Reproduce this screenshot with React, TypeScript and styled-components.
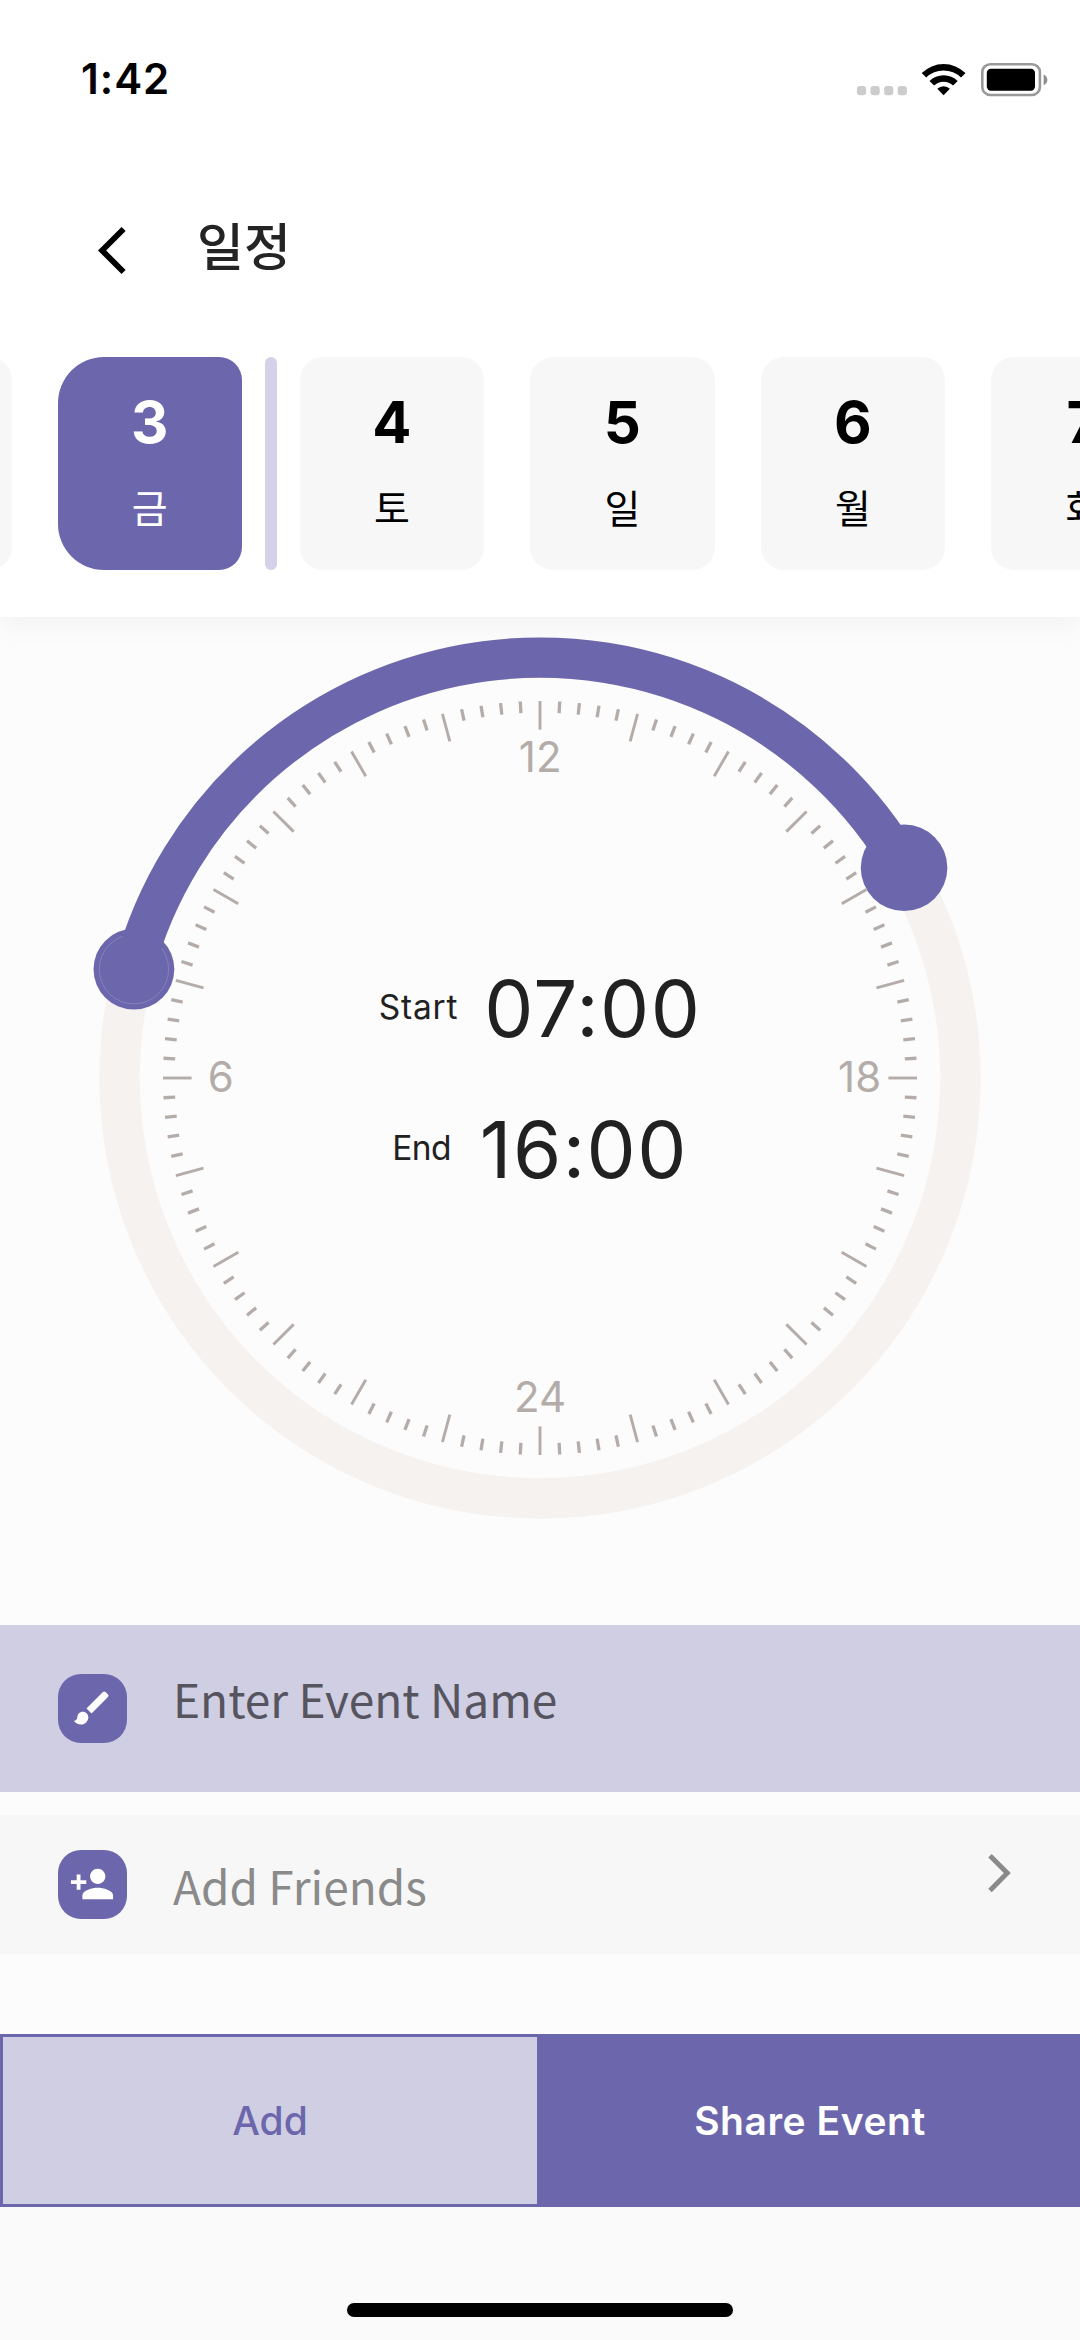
import React from "react";
import styled, { createGlobalStyle, css } from "styled-components";
import { MdBrush, MdPersonAdd } from "react-icons/md";

const color = {
  primary: "#6c67ac",
  soft: "#d0cee2",
  bar: "#d4d1e8",
  page: "#fcfcfc",
  foot: "#fafafa",
  card: "#f7f7f7",
  track: "#f6f2ef",
  tick: "#b4aca8",
  ink: "#212121",
};

const latin = `Inter, "Liberation Sans", sans-serif`;
const korean = `"Noto Sans CJK KR", "Noto Sans", sans-serif`;

const GlobalStyle = createGlobalStyle`
  * { box-sizing: border-box; }
  body { margin: 0; background: ${color.page}; }
`;

const Screen = styled.div`
  width: 1080px;
  height: 2340px;
  display: flex;
  flex-direction: column;
  overflow: hidden;
  background: ${color.page};
  font-family: ${latin};
  color: ${color.ink};
`;

const Header = styled.header`
  flex: none;
  height: 617px;
  display: flex;
  flex-direction: column;
  background: #fff;
  box-shadow: 0 11px 23px rgba(0, 0, 0, 0.035);
`;

const StatusBar = styled.div`
  height: 157px;
  display: flex;
  justify-content: space-between;
  align-items: center;
  padding: 0 32px 0 81px;
`;

const Clock = styled.span`
  font-size: 42px;
  font-weight: 600;
  line-height: 50px;
  letter-spacing: 1px;
  color: #000;
`;

const TitleBar = styled.div`
  height: 200px;
  display: flex;
  align-items: flex-start;
  padding: 62px 0 0 92px;
`;

const BackIcon = styled.svg`
  width: 40px;
  height: 64px;
  display: block;
`;

const Title = styled.h1`
  margin: -7px 0 0 65px;
  font-family: ${korean};
  font-size: 51px;
  font-weight: 500;
  line-height: 64px;
  color: #242424;
`;

const DateStrip = styled.div`
  display: flex;
  gap: 46.1px;
  margin-left: -172.9px;
`;

const ActiveDay = styled.div`
  flex: none;
  display: flex;
  gap: 23px;
  margin-right: -23px;
`;

const DayCard = styled.div<{ $active?: boolean }>`
  flex: none;
  width: 184.4px;
  height: 213.3px;
  padding-top: 25px;
  display: flex;
  flex-direction: column;
  align-items: center;
  border-radius: 23px;
  background: ${color.card};
  color: #000;
  ${(p) =>
    p.$active &&
    css`
      border-radius: 46px 23px 23px 46px;
      background: ${color.primary};
      color: #fff;
    `}
`;

const DayBar = styled.div`
  width: 11.6px;
  border-radius: 6px;
  background: ${color.bar};
`;

const DayNumber = styled.span`
  font-size: 58px;
  font-weight: 750;
  line-height: 80px;
`;

const DayName = styled.span`
  margin-top: 16px;
  font-family: ${korean};
  font-size: 39px;
  line-height: 56px;
`;

const DialArea = styled.section`
  flex: none;
  height: 1008px;
  display: grid;
  grid-template-columns: 1080px;
`;

const DialSvg = styled.svg`
  grid-area: 1 / 1;
  width: 1080px;
  height: 1008px;
  display: block;
`;

const Times = styled.div`
  grid-area: 1 / 1;
  z-index: 1;
  display: flex;
  flex-direction: column;
  align-items: center;
  gap: 41px;
  padding-top: 342px;
`;

const TimeRow = styled.div<{ $gap: number }>`
  display: flex;
  align-items: center;
  gap: ${(p) => p.$gap}px;
  height: 100px;
`;

const TimeLabel = styled.span<{ $tight?: boolean }>`
  font-size: 33.5px;
  line-height: 40px;
  letter-spacing: ${(p) => (p.$tight ? -0.6 : 0.8)}px;
  padding-bottom: 4px;
`;

const TimeValue = styled.span`
  font-size: 78px;
  line-height: 100px;
  letter-spacing: 1.4px;
`;

const Row = styled.div<{ $tall?: boolean }>`
  flex: none;
  height: ${(p) => (p.$tall ? 167 : 139)}px;
  margin-bottom: ${(p) => (p.$tall ? 23 : 80)}px;
  padding: 0 69px 0 57.6px;
  display: flex;
  align-items: center;
  background: ${(p) => (p.$tall ? color.soft : color.card)};
`;

const Tile = styled.div`
  flex: none;
  width: 69.4px;
  height: 69.4px;
  display: flex;
  align-items: center;
  justify-content: center;
  border-radius: 23px;
  background: ${color.primary};
  color: #fff;
`;

const RowText = styled.span<{ $strong?: boolean }>`
  flex: 1;
  margin-left: 46px;
  font-family: ${korean};
  font-size: 46px;
  line-height: 66px;
  color: ${(p) => (p.$strong ? "#56545f" : "#8a8a8a")};
  ${(p) => (p.$strong ? "margin-bottom: 22px" : "margin-top: 0")};
`;

const ChevronIcon = styled.svg`
  width: 24px;
  height: 40px;
  display: block;
  margin-bottom: 23px;
`;

const Actions = styled.div`
  flex: none;
  height: 173px;
  display: grid;
  grid-template-columns: 540px 540px;
`;

const ActionButton = styled.button<{ $filled?: boolean }>`
  display: flex;
  align-items: center;
  justify-content: center;
  padding: 0;
  border: 3px solid ${color.primary};
  border-radius: 0;
  background: ${(p) => (p.$filled ? color.primary : color.soft)};
  color: ${(p) => (p.$filled ? "#fff" : color.primary)};
  font-family: ${latin};
  font-size: 39px;
  font-weight: ${(p) => (p.$filled ? 600 : 500)};
  line-height: 48px;
  letter-spacing: ${(p) => (p.$filled ? 0.55 : 0)}px;
`;

const Footer = styled.footer`
  flex: 1;
  display: flex;
  justify-content: center;
  align-items: flex-end;
  padding-bottom: 23px;
  background: ${color.foot};
`;

const HomeIndicator = styled.div`
  width: 386px;
  height: 14.4px;
  border-radius: 8px;
  background: #000;
`;

function StatusIcons() {
  return (
    <svg width="192" height="36" viewBox="856 60 192 36">
      {[0, 1, 2, 3].map((i) => (
        <rect key={i} x={856.9 + i * 13.6} y="85" width="9.2" height="9.3" rx="3" fill="#ccc" />
      ))}
      <path d="M921.7 72.1a31 31 0 0 1 43.8 0l-4.5 4.5a24.7 24.7 0 0 0-34.8 0z" />
      <path d="M929.5 80a19.9 19.9 0 0 1 28.2 0l-4.6 4.6a13.4 13.4 0 0 0-19 0z" />
      <path d="M937.3 87.8a8.9 8.9 0 0 1 12.6 0l-6.3 6.5z" />
      <rect x="982.3" y="63.2" width="57.6" height="30.8" rx="8" fill="none" stroke="#999" strokeWidth="2.6" />
      <rect x="986.8" y="67.7" width="48.2" height="22.1" rx="4.2" />
      <path d="M1043.6 73.6c5 2 5 8.600 0 10.600z" fill="#8e8e8e" />
    </svg>
  );
}

const CX = 540;
const CY = 461;
const RING = 420.4;

function polar(deg: number, r: number): [number, number] {
  const a = (deg * Math.PI) / 180;
  return [CX + r * Math.sin(a), CY - r * Math.cos(a)];
}

const marks = [
  { text: "12", x: 540.2, y: 155.4 },
  { text: "6", x: 220.7, y: 475.4 },
  { text: "18", x: 859.6, y: 475.4 },
  { text: "24", x: 540, y: 795.2 },
];

function Dial() {
  const [sx, sy] = polar(-75, RING);
  const [ex, ey] = polar(60, RING);
  return (
    <DialSvg viewBox="0 0 1080 1008">
      <circle cx={CX} cy={CY} r={RING} fill="none" stroke={color.track} strokeWidth="40.4" />
      {Array.from({ length: 120 }, (_, i) => {
        const long = i % 5 === 0;
        const [x1, y1] = polar(i * 3, 377);
        const [x2, y2] = polar(i * 3, long ? 348.4 : 365.3);
        return (
          <line key={i} x1={x1} y1={y1} x2={x2} y2={y2} stroke={color.tick} strokeWidth={long ? 2.9 : 3.3} />
        );
      })}
      {marks.map((m) => (
        <text key={m.text} x={m.x} y={m.y} fontSize="42" fill={color.tick} textAnchor="middle">
          {m.text}
        </text>
      ))}
      <circle cx={sx} cy={sy} r="40.4" fill={color.primary} />
      <circle cx={sx} cy={sy} r="34.7" fill="none" stroke="#8f8bc1" strokeWidth="0.7" />
      <path
        d={`M${sx} ${sy}A${RING} ${RING} 0 0 1 ${ex} ${ey}`}
        fill="none"
        stroke={color.primary}
        strokeWidth="40.4"
      />
      <circle cx={ex} cy={ey} r="43.3" fill={color.primary} />
    </DialSvg>
  );
}

function Day({ number, name, active }: { number: string; name: string; active?: boolean }) {
  return (
    <DayCard $active={active}>
      <DayNumber>{number}</DayNumber>
      <DayName>{name}</DayName>
    </DayCard>
  );
}

export default function App() {
  return (
    <>
      <GlobalStyle />
      <Screen>
        <Header>
          <StatusBar>
            <Clock>1:42</Clock>
            <StatusIcons />
          </StatusBar>
          <TitleBar>
            <BackIcon viewBox="92 219 40 64">
              <path d="M123.6 229L102.1 250.5L123.6 272" fill="none" stroke="#000" strokeWidth="5.8" />
            </BackIcon>
            <Title>일정</Title>
          </TitleBar>
          <DateStrip>
            <DayCard />
            <ActiveDay>
              <Day number="3" name="금" active />
              <DayBar />
            </ActiveDay>
            <Day number="4" name="토" />
            <Day number="5" name="일" />
            <Day number="6" name="월" />
            <Day number="7" name="화" />
          </DateStrip>
        </Header>

        <DialArea>
          <Dial />
          <Times>
            <TimeRow $gap={26}>
              <TimeLabel>Start</TimeLabel>
              <TimeValue>07:00</TimeValue>
            </TimeRow>
            <TimeRow $gap={29}>
              <TimeLabel $tight>End</TimeLabel>
              <TimeValue>16:00</TimeValue>
            </TimeRow>
          </Times>
        </DialArea>

        <Row $tall>
          <Tile>
            <MdBrush size={44} />
          </Tile>
          <RowText $strong>Enter Event Name</RowText>
        </Row>
        <Row>
          <Tile>
            <MdPersonAdd size={46} />
          </Tile>
          <RowText>Add Friends</RowText>
          <ChevronIcon viewBox="987 1853 24 40">
            <path d="M990 1855.8L1007.3 1873.1L990 1890.4" fill="none" stroke="#8a8a8a" strokeWidth="4.9" />
          </ChevronIcon>
        </Row>

        <Actions>
          <ActionButton>Add</ActionButton>
          <ActionButton $filled>Share Event</ActionButton>
        </Actions>
        <Footer>
          <HomeIndicator />
        </Footer>
      </Screen>
    </>
  );
}
